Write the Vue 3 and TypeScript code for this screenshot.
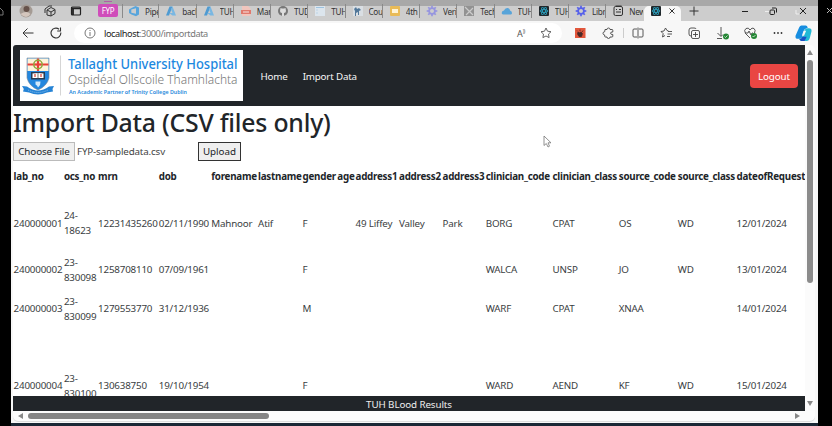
<script setup lang="ts">
interface Tab { icon: string; label: string }

const tabs: Tab[] = [
  { icon: 'devops', label: 'Pipelines' },
  { icon: 'azure', label: 'backend' },
  { icon: 'azure', label: 'TUH' },
  { icon: 'pdf', label: 'Manual' },
  { icon: 'github', label: 'TUD' },
  { icon: 'page', label: 'TUH' },
  { icon: 'paw', label: 'Courses' },
  { icon: 'slides', label: '4th Y' },
  { icon: 'gear', label: 'Verify' },
  { icon: 'grey', label: 'Tech' },
  { icon: 'cloud', label: 'TUH' },
  { icon: 'react', label: 'TUH' },
  { icon: 'gearblue', label: 'Library' },
  { icon: 'newtab', label: 'New tab' },
]

const columns: string[] = [
  'lab_no', 'ocs_no', 'mrn', 'dob', 'forename', 'lastname', 'gender', 'age',
  'address1', 'address2', 'address3', 'clinician_code', 'clinician_class',
  'source_code', 'source_class', 'dateofRequest',
]

const rows: string[][] = [
  ['240000001', '24- 18623', '12231435260', '02/11/1990', 'Mahnoor', 'Atif', 'F', '', '49 Liffey', 'Valley', 'Park', 'BORG', 'CPAT', 'OS', 'WD', '12/01/2024'],
  ['240000002', '23- 830098', '1258708110', '07/09/1961', '', '', 'F', '', '', '', '', 'WALCA', 'UNSP', 'JO', 'WD', '13/01/2024'],
  ['240000003', '23- 830099', '1279553770', '31/12/1936', '', '', 'M', '', '', '', '', 'WARF', 'CPAT', 'XNAA', '', '14/01/2024'],
  ['240000004', '23- 830100', '130638750', '19/10/1954', '', '', 'F', '', '', '', '', 'WARD', 'AEND', 'KF', 'WD', '15/01/2024'],
]
const teeth: number[] = [0, 45, 90, 135, 180, 225, 270, 315]
</script>

<template>
  <div class="screen">
    <div class="edge left">
      <svg width="11" height="22" viewBox="0 0 11 22"><path d="M-3 11l3-3 3 3v4h-3" fill="none" stroke="#777" /></svg>
    </div>

    <div class="window">
      <div class="tabbar">
        <div class="lead">
          <svg width="16" height="16" viewBox="0 0 16 16"><circle cx="8" cy="8" r="6.5" fill="#a49b94" /><circle cx="8.5" cy="6" r="3" fill="#66524a" /><path d="M2.5 11q6-4 10 0-4 6-10 0" fill="#d4c6bd" /></svg>
          <svg width="14" height="14" viewBox="0 0 14 14" fill="none" stroke="#333" stroke-width="1"><path d="M2 9V5l4-3h3M4 11V6l4-2.500 4 2v4L8 12z M4 6l4 2 4-2.300M8 8v4" /></svg>
          <svg width="12" height="12" viewBox="0 0 12 12"><rect x="1.500" y="2" width="9" height="8" rx="1" fill="none" stroke="#222" stroke-width="1.200" /><path d="M1.500 3.300h9M3 4v6" stroke="#222" stroke-width="1.800" /></svg>
          <span class="group">FYP</span>
        </div>
        <div class="tabs">
          <div v-for="(t, i) in tabs" :key="i" class="tab" :class="{ last: i === tabs.length - 1 }">
            <svg class="fav" width="12" height="12" viewBox="0 0 12 12">
              <path v-if="t.icon === 'devops'" fill-rule="evenodd" d="M1 4.500L3.500 3 7.500 1 11 2.500v7L8 11.200 3.500 9.500 1 8zM3.300 4.600v3.200L8 8.800V3.300z" fill="#58a5dc" />
              <g v-else-if="t.icon === 'azure'"><path d="M4.500 1.500h3L4 10.500H1z" fill="#4f9bd2" /><path d="M7.500 1.500L11 10.500H7.500L4 8h3.500L6 4.500z" fill="#79b7e2" /></g>
              <g v-else-if="t.icon === 'pdf'"><path d="M2 1h6l2.500 2.500V11H2z" fill="#f1c5bd" /><path d="M1 5h10v4H1z" fill="#e0796d" /><path d="M3 7h6" stroke="#fff" stroke-width=".8" /></g>
              <g v-else-if="t.icon === 'github'"><circle cx="6" cy="6" r="5" fill="#777" /><path d="M3.500 3l1.500.6h2L8.500 3l.5 3q0 2-2 2v3H5V8Q3 8 3 6z" fill="#ddd" /></g>
              <g v-else-if="t.icon === 'page'"><rect x="1" y="1" width="10" height="10" fill="#dce5ed" /><path d="M2 2.500h8M2.500 5h1M2.500 8h1" stroke="#9cc2df" /></g>
              <g v-else-if="t.icon === 'paw'"><rect x="1" y="1" width="10" height="10" fill="#d9dee3" /><path d="M2 4l2-2 1 2 2-1 2 2-2 1v4H6V7L4 8v3H3V6z" fill="#52789a" /></g>
              <g v-else-if="t.icon === 'slides'"><rect x="1" y="1" width="10" height="10" rx="1" fill="#e9bb57" /><rect x="3" y="4" width="6" height="4" fill="#fff4d5" /></g>
              <g v-else-if="t.icon === 'gear' || t.icon === 'gearblue'" :class="t.icon">
                <path v-for="a in teeth" :key="a" d="M6 .7v2.600" stroke-width="1.700" :transform="`rotate(${a} 6 6)`" />
                <circle cx="6" cy="6" r="2.900" fill="none" stroke-width="1.800" />
              </g>
              <g v-else-if="t.icon === 'grey'"><rect x="1" y="1" width="10" height="10" fill="#929292" /><path d="M2 2l8 8M10 3L3 10" stroke="#ccc" stroke-width="1.200" /></g>
              <path v-else-if="t.icon === 'cloud'" d="M1 9q-1-3 2-3.500Q4 2.500 7 3q2 .5 2 2.500 2 .5 2 2.500 0 1-1 1.500H2z" fill="#58a4d9" />
              <g v-else-if="t.icon === 'react'"><rect x="1" y="1" width="10" height="10" rx="1" fill="#20272b" /><g fill="none" stroke="#2b9bb8" stroke-width=".9"><ellipse cx="6" cy="6" rx="4" ry="1.500" /><ellipse cx="6" cy="6" rx="4" ry="1.500" transform="rotate(60 6 6)" /><ellipse cx="6" cy="6" rx="4" ry="1.500" transform="rotate(120 6 6)" /></g></g>
              <g v-else fill="none" stroke="#333"><rect x="2" y="1.500" width="8.500" height="9" rx="1.500" /><path d="M3.500 1h6M4 4.500h1M7 4.500h2M4 7h5" /></g>
            </svg>
            <span>{{ t.label }}</span>
          </div>
        </div>
        <div class="active">
          <svg width="12" height="12" viewBox="0 0 12 12"><rect x="1" y="1" width="10" height="10" rx="1" fill="#20272b" /><g fill="none" stroke="#2b9bb8" stroke-width=".9"><ellipse cx="6" cy="6" rx="4" ry="1.500" /><ellipse cx="6" cy="6" rx="4" ry="1.500" transform="rotate(60 6 6)" /><ellipse cx="6" cy="6" rx="4" ry="1.500" transform="rotate(120 6 6)" /></g></svg>
          <svg width="8" height="8" viewBox="0 0 8 8"><path d="M1.500 1.500l5 5M6.500 1.500l-5 5" stroke="#333" /></svg>
        </div>
        <svg class="plus" width="10" height="10" viewBox="0 0 10 10"><path d="M.5 5h9M5 .5v9" stroke="#333" /></svg>
        <div class="controls">
          <svg width="8" height="10" viewBox="0 0 8 10"><path d="M1 5.500h6" stroke="#222" /></svg>
          <svg width="14" height="10" viewBox="0 0 14 10"><path d="M0 5.500h5" stroke="#eee" /><rect x="5" y="4" width="4.500" height="4.500" rx="1" fill="none" stroke="#222" /><path d="M7 2h3.500q1 0 1 1v3.500" fill="none" stroke="#222" /></svg>
          <svg width="14" height="10" viewBox="0 0 14 10"><path d="M1 4v4h3" fill="none" stroke="#eee" /><path d="M5 2l6 6M11 2l-6 6" stroke="#222" /></svg>
        </div>
      </div>

      <div class="toolbar">
        <div class="navicons">
          <svg width="12" height="12" viewBox="0 0 12 12" fill="none" stroke="#333"><path d="M11.500 6H1M5.500 1.500L1 6l4.500 4.500" /></svg>
          <svg width="12" height="12" viewBox="0 0 12 12" fill="none" stroke="#333" stroke-width="1.100"><path d="M10.800 5.500A4.900 4.900 0 1 1 9 2.200M10.500.5V4H7.200" /></svg>
        </div>
        <div class="address">
          <svg class="info" width="12" height="12" viewBox="0 0 12 12" fill="none" stroke="#777"><circle cx="6" cy="6" r="5" /><path d="M6 5v4M6 3v1" /></svg>
          <span class="url"><b>localhost</b>:3000/importdata</span>
          <span class="read">A<sup>))</sup></span>
          <svg class="star" width="12" height="12" viewBox="0 0 12 12" fill="none" stroke="#555" stroke-width=".9"><path d="M6 1l1.500 3.200 3.500.5-2.500 2.400.6 3.500L6 9l-3.100 1.600.6-3.500L1 4.700l3.500-.5z" /></svg>
        </div>
        <div class="tools">
          <svg viewBox="0 0 14 14"><rect x="2" y="2" width="10.500" height="10" fill="#e2573c" stroke="none" /><path d="M5 6l1 1 2-1 1.500 1.500-1 3H6L4.500 8zM4 4.500l1 1M7 3.500v1.500M10 4.500L9 6" fill="#4a2a28" stroke="#4a2a28" stroke-width=".8" /></svg>
          <svg viewBox="0 0 14 14"><path d="M4 3.500h2Q6 2 7.500 2T9 3.500h2q.8 0 .8.800V6Q9.500 5.800 9.500 7.200t2.300 1.300v1.700q0 .8-.8.800H9q0 1.500-1.500 1.500T6 11H4.500q-.8 0-.8-.8V9Q2 8.800 2 7.300T3.700 5.700z" /></svg>
          <i class="sep"></i>
          <svg viewBox="0 0 14 14"><path d="M6 3H3Q2 3 2 4v6q0 1 1 1h3M8 3h3q1 0 1 1v6q0 1-1 1H8M7 1.500v11" /></svg>
          <svg viewBox="0 0 14 14"><path d="M9.500 5L8 4.500 6.500 2 5 5l-3 .5 2.200 2.200-.7 3.300L6 9.500M9 5.500h4M8.500 8H13M8 10.500h3" /></svg>
          <svg viewBox="0 0 14 14"><path d="M4 10Q2 10 2 8V4q0-2 2-2h3q2 0 2 1" /><rect x="4.500" y="4.500" width="8" height="8" rx="1.500" /><path d="M8.500 6v5M6 8.500h5" /></svg>
          <svg viewBox="0 0 14 14"><path d="M6 1v9M2.500 7L6 10.500 8 8.500M2 12.500h5" /><circle cx="11" cy="10.500" r="3" fill="#248634" stroke="none" /><path d="M9.500 10.500l1 1 2-2" stroke="#fff" stroke-width=".7" /></svg>
          <svg viewBox="0 0 14 14"><path d="M7 12L2.500 7.500Q.5 4 3 2.500T7 4q2-3 4-1.500T11.500 7M2 7h3l1-2 2 4 1-2h1" /><circle cx="11" cy="10" r="3" fill="#248634" stroke="none" /><path d="M9.500 10l1 1 2-2" stroke="#fff" stroke-width=".7" /></svg>
          <svg viewBox="0 0 14 14"><g fill="#333" stroke="none"><circle cx="3.500" cy="7" r=".9" /><circle cx="7" cy="7" r=".9" /><circle cx="10.500" cy="7" r=".9" /></g></svg>
          <svg class="copilot" viewBox="0 0 16 16"><path d="M4 2q.7-1.500 2-1.500h4q1.500 0 2 2L9 4 7 11q-.5 2-2 2H3q-3 0-2.500-3z" fill="#168de0" /><path d="M12 3h1q3 0 2.500 3L14 12q-.8 3-3 3H6q-1.500 0-2-2 2 .5 3-2l2-6q.7-2 3-2" fill="#21b9d6" /><path d="M4 13q2 .5 3-2h4L9 15H6q-1.500 0-2-2" fill="#1b4fc4" /><path d="M8 5.500h2.500L8.500 10H6.500z" fill="#f7f7f7" /></svg>
        </div>
      </div>

      <div class="viewport">
        <main class="page">
          <header class="navbar">
            <svg class="logo" width="223" height="51" viewBox="0 0 223 51">
              <rect width="223" height="51" fill="#fff" />
              <path d="M7 8h22v20q-2 8-11 12Q9 36 7 28z" fill="#2487df" stroke="#7b8794" stroke-width=".6" />
              <path d="M7.500 8.500h21V21h-21z" fill="#fff3da" />
              <path d="M18 8.500V21M7.500 14.500h21" stroke="#ea4038" stroke-width="2.200" />
              <circle cx="18" cy="14.500" r="4.200" fill="none" stroke="#8fa83d" stroke-width="1.500" />
              <path d="M18 11.500v6M15 14.500h6" stroke="#ea4038" stroke-width="1.600" />
              <path d="M11 22h14v7.500H11z" fill="#293b51" /><path d="M12.500 23.500l5.500-.5 5.500.5v4.500h-11z" fill="#fff" />
              <path d="M18 23v5.500" stroke="#555" stroke-width=".8" /><path d="M15 24v3M21 24v3" stroke="#e46458" stroke-width="1.500" />
              <path d="M15.500 31.500h5q.5 3-2.500 6-.5-2-2.500-3z" fill="#d4e9fa" />
              <path d="M2 36l5 .5q11 8 22 0l5-.5-1.500 3 .5 2.500-6 1q-9 4-18 0l-6-1 .8-2.500z" fill="#2583d5" />
              <path d="M8 40q10 5 20 0" fill="none" stroke="#9fcdf2" stroke-width=".8" stroke-dasharray="1 1" />
              <path d="M40.500 5.500v40" stroke="#d5d5d5" />
              <text class="l1" x="48" y="18.800" textLength="169.500" lengthAdjust="spacingAndGlyphs">Tallaght University Hospital</text>
              <text class="l2" x="48" y="34" textLength="169.500" lengthAdjust="spacingAndGlyphs">Ospidéal Ollscoile Thamhlachta</text>
              <text class="l3" x="49" y="43.500" textLength="118" lengthAdjust="spacingAndGlyphs">An Academic Partner of Trinity College Dublin</text>
            </svg>
            <nav><a>Home</a><a>Import Data</a></nav>
            <button class="logout">Logout</button>
          </header>

          <h1>Import Data (CSV files only)</h1>
          <div class="upload">
            <span class="choose">Choose File</span>
            <span class="filename">FYP-sampledata.csv</span>
            <span class="send">Upload</span>
          </div>

          <div class="data">
            <div class="row head"><b v-for="c in columns" :key="c">{{ c }}</b></div>
            <div v-for="(r, i) in rows" :key="i" class="row" :class="'r' + (i + 1)">
              <span v-for="(c, j) in r" :key="j" :class="{ wrap: j === 1 }">{{ c }}</span>
            </div>
          </div>
          <footer>TUH BLood Results</footer>
        </main>
        <div class="vscroll">
          <svg width="6" height="5" viewBox="0 0 6 5"><path d="M3 0l3 5H0z" /></svg>
          <i></i>
          <svg width="6" height="5" viewBox="0 0 6 5"><path d="M3 5l3-5H0z" /></svg>
        </div>
      </div>
      <div class="hscroll">
        <svg width="5" height="6" viewBox="0 0 5 6"><path d="M0 3l5-3v6z" /></svg>
        <i></i>
        <svg width="5" height="6" viewBox="0 0 5 6"><path d="M5 3L0 0v6z" /></svg>
      </div>
      <div class="taskbar"></div>
    </div>

    <div class="edge right">
      <svg width="14" height="22" viewBox="0 0 14 22"><path d="M9 8l5 5M14 8l-5 5" stroke="#bbb" /></svg>
    </div>
    <svg class="cursor" width="9" height="13" viewBox="0 0 9 13"><path d="M1 1v9.500l2.300-2L5 12l1.500-.8L5 7.800h3z" fill="#fff" stroke="#777" stroke-width=".8" /></svg>
  </div>
</template>

<style>
body { margin: 0; background: #000; overflow: hidden; }
</style>
<style scoped>
* { box-sizing: border-box; }
.screen { position: relative; display: flex; width: 832px; height: 426px; overflow: hidden; background: #000; font-family: "Noto Sans", "Open Sans", sans-serif; font-size: 9.8px; color: #212529; }
svg { display: block; flex: none; }
.edge { flex: none; width: 11px; }
.edge.right { width: 14px; }
.window { width: 807px; display: flex; flex-direction: column; background: #f7f7f7; }

.tabbar { display: flex; height: 21px; background: linear-gradient(#a8a8a8 0 6px, #cdcdcd 6px); }
.lead { width: 111px; flex: none; display: flex; align-items: center; padding-left: 7px; }
.lead svg:nth-child(2) { margin-left: 9px; }
.lead svg:nth-child(3) { margin-left: 13px; }
.group { margin-left: 16px; width: 20px; height: 13px; border-radius: 2px; background: #cf4dba; box-shadow: 0 -9px 0 -6px #b35da8; color: #fff; font-size: 8px; line-height: 13px; text-align: center; letter-spacing: -.3px; }
.tabs { display: flex; flex: none; width: 522px; padding-top: 4px; }
.tab { width: 37.25px; flex: none; height: 14px; display: flex; align-items: center; border-right: 1px solid #8a8a8a; overflow: hidden; color: #333; font-size: 8.2px; letter-spacing: -.3px; white-space: nowrap; }
.tab.last { border-color: transparent; }
.tab:first-child { box-shadow: inset 1px 0 #8a8a8a; }
.fav { margin: 0 5px 0 6px; }
.gear { stroke: #9695df; }
.gearblue { stroke: #5660ea; }
.tab span { overflow: hidden; flex: 1; }
.active { width: 37px; height: 15px; margin-top: 6px; background: #f7f7f7; border-radius: 5px 5px 0 0; display: flex; align-items: center; padding: 0 5px 5px 6px; gap: 6px; }
.plus { margin: 6px 0 0 8px; }
.controls { display: flex; margin: 6px 0 0 42px; gap: 16px; }

.toolbar { height: 24px; display: flex; align-items: center; }
.navicons { width: 63px; display: flex; gap: 16px; padding-left: 11px; }
.address { width: 488px; height: 20px; border-radius: 10px; background: #fff; display: flex; align-items: center; padding-left: 10px; }
.url { margin-left: 8px; color: #777; font-size: 9.2px; letter-spacing: -.42px; width: 413px; padding-top: 1px; }
.url b { font-weight: 400; color: #222; }
.read { width: 17px; color: #555; font-size: 9px; margin-right: 6px; }
.read sup { font-size: 5px; line-height: 0; letter-spacing: -.5px; }
.tools { display: flex; align-items: center; margin-left: 4px; }
.tools svg { width: 14px; height: 14px; margin: 0 7px; fill: none; stroke: #444; stroke-width: .9; }
.sep { width: 1px; height: 10px; background: #ccc; margin: 0 .5px; }
.tools .copilot { width: 17px; height: 17px; margin: 0 0 0 3px; stroke: none; }

.viewport { height: 366px; display: flex; padding-left: 2px; }
.page { width: 792px; background: #fff; display: flex; flex-direction: column; }
.navbar { height: 61px; flex: none; background: #212529; display: flex; align-items: center; padding: 0 7px; border-top-left-radius: 3px; }
.l1 { fill: #1b88e0; font: 500 13.5px "Noto Sans", sans-serif; }
.l2 { fill: #777; font: 300 13px "Noto Sans", sans-serif; }
.l3 { fill: #2889db; font: 600 6px "Noto Sans", sans-serif; }
nav { display: flex; gap: 15px; margin-left: 17.500px; padding-top: 1px; color: #f5f5f5; letter-spacing: -.18px; }
.logout { margin-left: auto; width: 48px; height: 24px; border: 0; border-radius: 4px; background: #e94643; color: #fff; font: inherit; letter-spacing: -.12px; padding: 1px 0 0; }
h1 { margin: 0; height: 34px; flex: none; font-size: 24.800px; font-weight: 500; line-height: 32px; letter-spacing: -.22px; white-space: nowrap; }
.upload { height: 20px; flex: none; display: flex; align-items: center; padding-top: 2px; }
.choose { width: 62px; height: 19px; border: 1px solid #bbb; background: #efefef; text-align: center; line-height: 18px; letter-spacing: -.1px; }
.filename { width: 123px; padding-left: 2px; letter-spacing: -.15px; color: #444; }
.send { width: 43px; height: 19px; border: 1.500px solid #333; background: #efefef; text-align: center; line-height: 17px; }
.data { height: 236px; flex: none; overflow: hidden; padding-top: 1.500px; }
.row { display: grid; grid-template-columns: 50.300px 34.200px 60.700px 52.500px 46.800px 44.500px 34.800px 18.200px 43.500px 43.500px 43.200px 66.800px 66.200px 59px 58.800px 68px; padding-left: .6px; align-items: center; line-height: 15px; white-space: nowrap; letter-spacing: -.19px; color: #3a3e42; }
.row .wrap { white-space: normal; }
.head { height: 30px; color: #212529; letter-spacing: -.25px; }
.r1 { height: 63px; }
.r2 { height: 30px; }
.r3 { height: 48px; }
.r4 { height: 106px; }
footer { height: 15px; flex: none; background: #212529; color: #eee; text-align: center; line-height: 17px; letter-spacing: -.1px; overflow: hidden; }
.vscroll { width: 10px; display: flex; flex-direction: column; align-items: center; padding: 5px 0; background: #fbfbfb; border-top-right-radius: 5px; }
.vscroll i { width: 6px; height: 223px; margin: 5px 0 auto; border-radius: 3px; background: #8b8b8b; }
.vscroll svg, .hscroll svg { fill: #888; }
.hscroll { height: 10px; margin: 0 3px 0 2px; background: #fcfcfc; display: flex; align-items: center; padding: 0 15px 0 5px; border-radius: 0 0 5px 5px; box-shadow: 0 1px #ddd; }
.hscroll i { width: 241px; height: 6px; margin: 0 auto 0 5px; border-radius: 3px; background: #858585; }
.taskbar { height: 3px; margin-top: 2px; background: #1b2836; }
.cursor { position: absolute; left: 543px; top: 135px; }
</style>
